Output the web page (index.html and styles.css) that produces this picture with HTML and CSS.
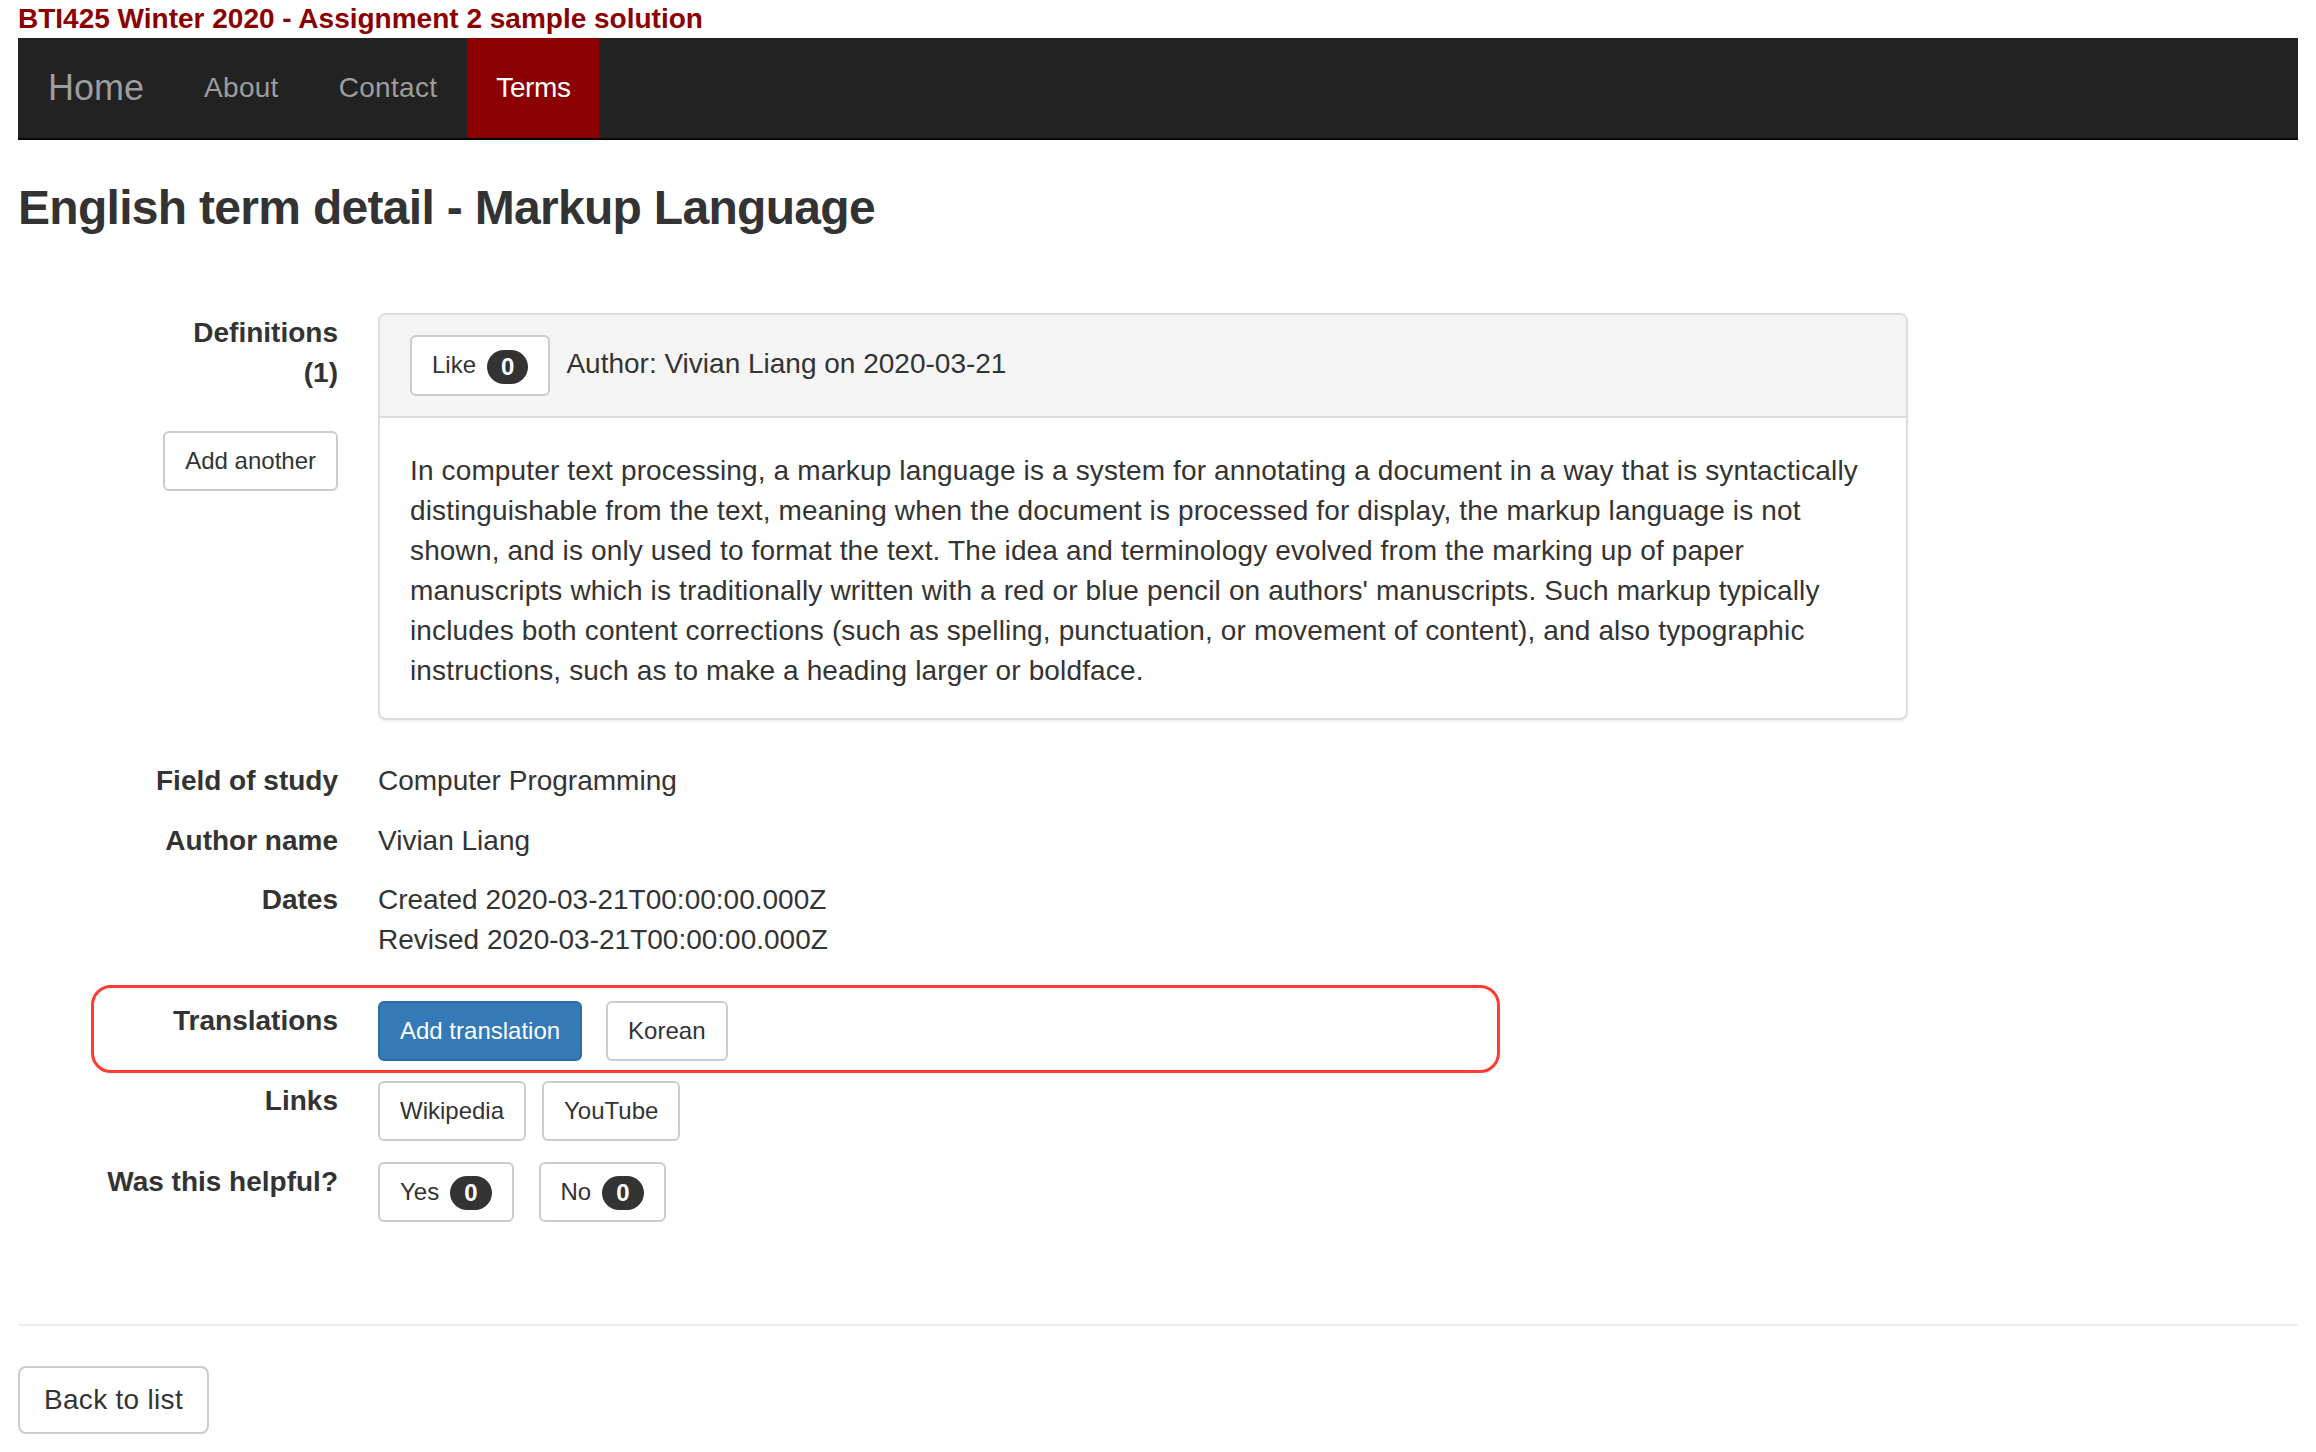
FILE: index.html
```html
<!DOCTYPE html>
<html lang="en">
<head>
<meta charset="utf-8">
<title>English term detail - Markup Language</title>
<link rel="stylesheet" href="styles.css">
</head>
<body>
<div class="page">
  <div class="site-title">BTI425 Winter 2020 - Assignment 2 sample solution</div>
  <nav class="navbar">
    <a class="brand" href="#">Home</a>
    <ul class="nav">
      <li><a href="#">About</a></li>
      <li><a href="#">Contact</a></li>
      <li class="active"><a href="#">Terms</a></li>
    </ul>
  </nav>

  <h3 class="page-heading">English term detail - Markup Language</h3>

  <div class="details">
    <div class="row row-defs">
      <div class="label">
        Definitions<br>(1)
        <div class="label-action"><a class="btn btn-sm" href="#">Add another</a></div>
      </div>
      <div class="value">
        <div class="panel">
          <div class="panel-heading">
            <a class="btn btn-sm like-btn" href="#">Like<span class="badge">0</span></a>
            <span class="author">Author: Vivian Liang on 2020-03-21</span>
          </div>
          <div class="panel-body">
            In computer text processing, a markup language is a system for annotating a document in a way that is syntactically<br>
            distinguishable from the text, meaning when the document is processed for display, the markup language is not<br>
            shown, and is only used to format the text. The idea and terminology evolved from the marking up of paper<br>
            manuscripts which is traditionally written with a red or blue pencil on authors' manuscripts. Such markup typically<br>
            includes both content corrections (such as spelling, punctuation, or movement of content), and also typographic<br>
            instructions, such as to make a heading larger or boldface.
          </div>
        </div>
      </div>
    </div>

    <div class="row">
      <div class="label">Field of study</div>
      <div class="value">Computer Programming</div>
    </div>

    <div class="row row-author">
      <div class="label">Author name</div>
      <div class="value">Vivian Liang</div>
    </div>

    <div class="row row-dates">
      <div class="label">Dates</div>
      <div class="value text-lines">
        <div>Created 2020-03-21T00:00:00.000Z</div>
        <div>Revised 2020-03-21T00:00:00.000Z</div>
      </div>
    </div>

    <div class="row row-translations">
      <div class="highlight"></div>
      <div class="label">Translations</div>
      <div class="value buttons gap-24">
        <a class="btn btn-sm btn-primary" href="#">Add translation</a>
        <a class="btn btn-sm" href="#">Korean</a>
      </div>
    </div>

    <div class="row row-links">
      <div class="label">Links</div>
      <div class="value buttons gap-16">
        <a class="btn btn-sm" href="#">Wikipedia</a>
        <a class="btn btn-sm" href="#">YouTube</a>
      </div>
    </div>

    <div class="row">
      <div class="label">Was this helpful?</div>
      <div class="value buttons gap-25">
        <a class="btn btn-sm" href="#">Yes<span class="badge">0</span></a>
        <a class="btn btn-sm" href="#">No<span class="badge">0</span></a>
      </div>
    </div>
  </div>

  <hr class="divider">

  <a class="btn btn-back" href="#">Back to list</a>
</div>
</body>
</html>
```

FILE: styles.css
```css
* {
  box-sizing: border-box;
}

html, body {
  margin: 0;
  padding: 0;
  background: #fff;
}

body {
  font-family: "Liberation Sans", Arial, Helvetica, sans-serif;
  font-size: 28px;
  line-height: 40px;
  color: #333;
}

.page {
  padding: 0 18px;
}

/* ---------- site title ---------- */
.site-title {
  font-weight: bold;
  color: #8b0000;
  line-height: 38px;
}

/* ---------- navbar ---------- */
.navbar {
  display: flex;
  height: 102px;
  background: #222;
  border-bottom: 2px solid #080808;
}

.brand {
  padding: 30px;
  font-size: 36px;
  line-height: 40px;
  color: #9d9d9d;
  text-decoration: none;
}

.nav {
  display: flex;
  list-style: none;
  margin: 0;
  padding: 0;
}

.nav a {
  display: block;
  padding: 30px;
  line-height: 40px;
  color: #9d9d9d;
  text-decoration: none;
  letter-spacing: 0.3px;
}

.nav .active a {
  background: #8b0000;
  color: #fff;
  padding: 30px 28px 30px 29px;
  letter-spacing: -0.4px;
}

/* ---------- heading ---------- */
.page-heading {
  margin: 41px 0 0;
  font-size: 48px;
  line-height: 53px;
  font-weight: bold;
  letter-spacing: -0.7px;
  color: #333;
}

/* ---------- detail rows ---------- */
.details {
  margin-top: 79px;
}

.row {
  display: grid;
  grid-template-columns: 320px 1fr;
  column-gap: 40px;
  margin-bottom: 20px;
}

.row:last-child {
  margin-bottom: 0;
}

.row-defs {
  margin-bottom: 41px;
}

.row-author {
  margin-bottom: 19px;
}

.row-dates {
  margin-bottom: 41px;
}

.row-links {
  margin-bottom: 21px;
}

.label {
  font-weight: bold;
  text-align: right;
  white-space: nowrap;
}

.label-action {
  margin-top: 38px;
  font-weight: normal;
}

.value {
  min-width: 0;
}

.buttons {
  display: flex;
  align-items: flex-start;
}

.gap-24 { gap: 24px; }
.gap-16 { gap: 16px; }
.gap-25 { gap: 25px; }

/* ---------- highlight annotation ---------- */
.row-translations {
  position: relative;
}

.highlight {
  position: absolute;
  left: 73px;
  top: -16px;
  width: 1409px;
  height: 88px;
  border: 3px solid #ff3b30;
  border-radius: 20px;
  pointer-events: none;
}

/* ---------- panel ---------- */
.panel {
  width: 1530px;
  border: 2px solid #ddd;
  border-radius: 8px;
  background: #fff;
  box-shadow: 0 2px 2px rgba(0, 0, 0, 0.05);
}

.panel-heading {
  display: flex;
  align-items: baseline;
  padding: 20px 30px;
  background: #f5f5f5;
  border-bottom: 2px solid #ddd;
  border-radius: 6px 6px 0 0;
}

.like-btn {
  margin-right: 16px;
  padding-right: 22px;
}

.panel-body {
  padding: 33px 30px 27px;
  letter-spacing: 0.14px;
}

/* ---------- buttons ---------- */
.btn {
  display: inline-block;
  padding: 12px 24px;
  font-size: 28px;
  line-height: 40px;
  font-weight: normal;
  color: #333;
  background: #fff;
  border: 2px solid #ccc;
  border-radius: 8px;
  text-decoration: none;
  white-space: nowrap;
}

.btn-back {
  letter-spacing: 0.3px;
}

.btn-sm {
  padding: 10px 20px;
  font-size: 24px;
  line-height: 36px;
  border-radius: 6px;
  letter-spacing: 0;
}

.btn-primary {
  color: #fff;
  background: #337ab7;
  border-color: #2e6da4;
}

.badge {
  display: inline-block;
  margin-left: 11px;
  padding: 5px 14px;
  font-size: 24px;
  font-weight: bold;
  line-height: 1;
  color: #fff;
  background: #333;
  border-radius: 20px;
  vertical-align: middle;
}

/* ---------- footer ---------- */
.divider {
  margin: 102px 0 40px;
  height: 0;
  border: 0;
  border-top: 2px solid #eee;
}
```
